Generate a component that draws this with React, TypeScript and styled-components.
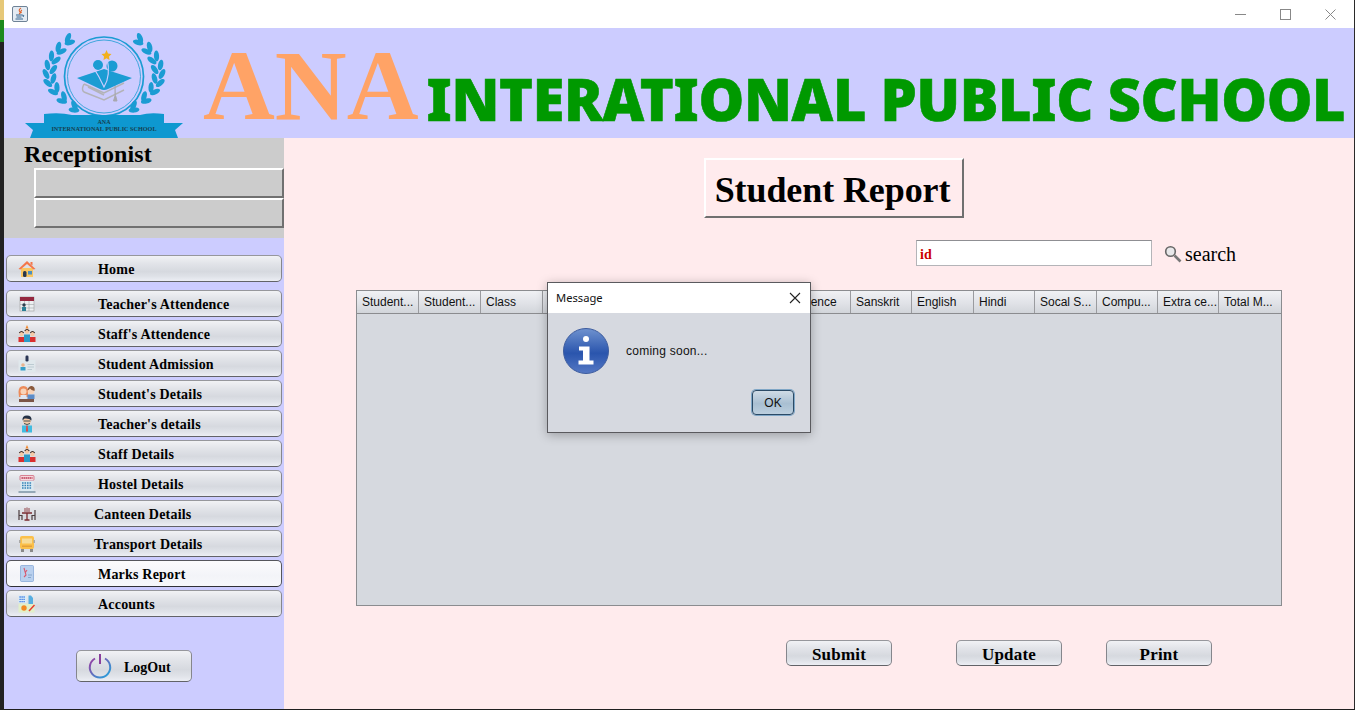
import styled, { createGlobalStyle } from "styled-components";

const SERIF = `"Liberation Serif", "Times New Roman", serif`;
const SANS = `"Liberation Sans", Arial, sans-serif`;
const NIMBUS = "linear-gradient(#f1f2f5 0%, #e2e4e9 30%, #d6d9df 62%, #dfe2e8 82%, #eceef4 100%)";

const GlobalStyle = createGlobalStyle`
  html, body { margin: 0; padding: 0; height: 100%; overflow: hidden; background: #1f1f1f; }
  * { box-sizing: border-box; }
`;

const Screen = styled.div`
  display: flex;
  width: 1355px;
  height: 710px;
  background: #1f1f1f;
`;

const DesktopEdge = styled.div`
  flex: 0 0 4px;
  background: linear-gradient(#e6c877 0 20px, #1c8a1c 20px 42px, #222 42px);
`;

const Window = styled.div`
  flex: 1;
  min-width: 0;
  display: flex;
  flex-direction: column;
  height: 709px;
  border-right: 1px solid #2a2a2a;
`;

const TitleBar = styled.div`
  flex: 0 0 28px;
  display: flex;
  align-items: center;
  justify-content: space-between;
  background: #fff;
  padding: 0 18px 0 8px;
`;

const Controls = styled.div`
  display: flex;
  align-items: center;
  gap: 34px;
`;

const Banner = styled.header`
  flex: 0 0 110px;
  display: flex;
  align-items: flex-start;
  padding-left: 20px;
  background: #ccccff;
  overflow: hidden;
`;

const LogoMark = styled.svg`
  flex: none;
`;

const Ana = styled.span`
  flex: none;
  margin: 8px 0 0 19px;
  font: bold 99.5px/100px ${SERIF};
  color: #ffa366;
`;

const SchoolName = styled.span`
  flex: none;
  margin: 33px 0 0 8px;
  font: 900 57.5px/76px "Noto Sans", sans-serif;
  letter-spacing: -0.36px;
  -webkit-text-stroke: 0.6px #009900;
  color: #009900;
  white-space: nowrap;
`;

const Body = styled.div`
  flex: 1;
  display: flex;
  min-height: 0;
`;

const Sidebar = styled.aside`
  flex: 0 0 280px;
  display: flex;
  flex-direction: column;
  background: #ccccff;
`;

const UserPanel = styled.div`
  height: 100px;
  padding-left: 30px;
  background: #cccccc;
`;

const UserRole = styled.h2`
  height: 30px;
  margin: 0 0 0 -10px;
  font: bold 24px/32px ${SERIF};
  letter-spacing: 0.1px;
  color: #000;
`;

const UserField = styled.div`
  height: 30px;
  background: #cccccc;
  border: 2px solid;
  border-color: #fff #707070 #707070 #fff;
`;

const Menu = styled.nav`
  display: flex;
  flex-direction: column;
  gap: 3px;
  margin: 17px 2px 0;
`;

const MenuButton = styled.button<{ $active?: boolean; $first?: boolean }>`
  display: flex;
  align-items: center;
  width: 276px;
  height: 27px;
  margin: 0 0 ${p => (p.$first ? "5px" : "0")};
  padding: 0 0 0 10px;
  background: ${p => (p.$active ? "linear-gradient(#fbfbfd, #f3f4f8 60%, #f7f8fb)" : NIMBUS)};
  border: 1px solid;
  border-color: ${p => (p.$active ? "#55565c #55565c #303136" : "#96979c #85868c #626368")};
  border-radius: 5px;
  color: #000;
`;

const IconSlot = styled.span`
  display: flex;
  flex: 0 0 20px;
  justify-content: center;
`;

const MenuLabel = styled.span<{ $left: number }>`
  margin: 2px 0 0 ${p => p.$left}px;
  font: bold 14px/16px ${SERIF};
  letter-spacing: 0.2px;
  white-space: nowrap;
`;

const LogoutButton = styled.button`
  display: flex;
  align-items: center;
  width: 116px;
  height: 32px;
  margin: 33px 0 0 72px;
  padding: 0 0 0 11px;
  gap: 12px;
  background: ${NIMBUS};
  border: 1px solid;
  border-color: #96979c #85868c #626368;
  border-radius: 5px;
  color: #000;
`;

const LogoutLabel = styled.span`
  margin-top: 3px;
  font: bold 14px/16px ${SERIF};
`;

const Main = styled.main`
  position: relative;
  flex: 1;
  display: flex;
  flex-direction: column;
  background: #ffebed;
`;

const ReportTitle = styled.h1`
  align-self: flex-start;
  width: 260px;
  height: 60px;
  margin: 20px 0 0 420px;
  padding-right: 3px;
  border: 2px solid;
  border-color: #fff #707070 #707070 #fff;
  font: bold 36px/60px ${SERIF};
  letter-spacing: -0.1px;
  text-align: center;
  color: #000;
`;

const SearchRow = styled.div`
  display: flex;
  align-items: center;
  margin: 22px 0 0 632px;
`;

const SearchInput = styled.div`
  width: 236px;
  height: 26px;
  padding: 2px 0 0 3px;
  background: #fff;
  border: 1px solid #b4b4b8;
  border-top-color: #8f8f93;
  font: bold 14px/24px ${SERIF};
  color: #cc0000;
`;

const SearchLabel = styled.span`
  display: flex;
  align-items: center;
  gap: 3px;
  margin: 1px 0 0 12px;
  font: 20px/24px ${SERIF};
  color: #000;
`;

const Table = styled.div`
  display: flex;
  flex-direction: column;
  width: 926px;
  height: 316px;
  margin: 24px 0 0 72px;
  background: #d6d9df;
  border: 1px solid #8b8c8f;
`;

const TableHead = styled.div`
  display: grid;
  grid-template-columns: 62px 62px 62px 61px 62px 62px 61px 62px 61px 62px 61px 62px 61px 61px 62px;
  height: 23px;
  background: linear-gradient(#f0f1f4, #dfe1e6 60%, #d2d5da);
  border-bottom: 1px solid #8b8c8f;
`;

const HeadCell = styled.span`
  padding-left: 5px;
  overflow: hidden;
  border-right: 1px solid #9a9b9f;
  font: 12px/23px ${SANS};
  color: #111;
  white-space: nowrap;
  &:last-child { border-right: 0; }
`;

const Actions = styled.div`
  display: flex;
  margin: 34px 0 0 502px;
`;

const ActionButton = styled.button<{ $gap: number }>`
  width: 106px;
  height: 26px;
  margin-right: ${p => p.$gap}px;
  padding: 3px 0 0;
  background: ${NIMBUS};
  border: 1px solid;
  border-color: #96979c #85868c #626368;
  border-radius: 5px;
  font: bold 17px/20px ${SERIF};
  letter-spacing: 0.2px;
  color: #000;
`;

const Dialog = styled.div`
  position: absolute;
  left: 263px;
  top: 144px;
  display: flex;
  flex-direction: column;
  width: 264px;
  height: 151px;
  background: #d6d9e0;
  border: 1px solid #5a5a5e;
  box-shadow: 0 2px 10px rgba(0, 0, 0, 0.28);
`;

const DialogTitle = styled.div`
  display: flex;
  align-items: center;
  justify-content: space-between;
  flex: 0 0 30px;
  padding: 0 9px 0 8px;
  background: #fff;
  font: 11.2px/16px "Noto Sans", sans-serif;
  color: #111;
`;

const DialogMessage = styled.div`
  display: flex;
  align-items: center;
  gap: 17px;
  padding: 15px 0 0 15px;
  font: 12px/16px ${SANS};
  letter-spacing: 0.25px;
  color: #111;
`;

const OkButton = styled.button`
  align-self: flex-end;
  width: 42px;
  height: 25px;
  margin: 16px 16px 0 0;
  padding: 1px 0 0;
  background: linear-gradient(#cfdbe6, #a9bfd2 55%, #bccfde);
  border: 1px solid #2b4a66;
  border-radius: 4px;
  box-shadow: 0 0 0 1px #7fa6c6;
  font: 12px/20px ${SANS};
  color: #111;
`;

// laurel leaves follow a curved branch from the top of the crest to its foot,
// outer and inner one by turns; t runs -1 (top) to 1 (bottom)
const LAUREL = Array.from({ length: 17 }, (_, i) => {
  const t = -1 + i / 8;
  const k = t < 0 ? 22 : 28;
  const outer = i % 2 === 0;
  const x = 104 - (58 - k * t * t) + (outer ? 0 : 7);
  const y = 74 + 36 * t;
  const tangent = (Math.atan((-2 * k * t) / 36) * 180) / Math.PI;
  return { x, y, r: tangent + (outer ? -28 : 28) };
});

function Logo() {
  return (
    <LogoMark width="160" height="110" viewBox="24 28 160 110">
      {LAUREL.map(({ x, y, r }, i) => (
        <g key={i} fill="#1b9cd3">
          <ellipse cx={x} cy={y} rx="2.600" ry="5.400" transform={`rotate(${r} ${x} ${y})`} />
          <ellipse cx={208 - x} cy={y} rx="2.600" ry="5.400" transform={`rotate(${-r} ${208 - x} ${y})`} />
        </g>
      ))}
      <circle cx="104" cy="76.500" r="39.500" fill="none" stroke="#1b9cd3" strokeWidth="1.700" />
      <circle cx="104" cy="76.500" r="36.500" fill="none" stroke="#1b9cd3" strokeWidth="0.800" />
      <path d="M84 84 L104 93 L124 83 M84 84 Q81 90 84 92 L104 100 L124 90 M88 87 L104 95" fill="none" stroke="#b3b3b8" strokeWidth="1.500" />
      <path d="M115 85 V96 L113.500 101 H117 L115.700 96" fill="#a8a8ae" stroke="#a8a8ae" strokeWidth="1" />
      <path d="M77 78 L104 69 L132 78 L108 89 Q104 91 100 89 Z" fill="#1b9cd3" />
      <circle cx="98" cy="65" r="5" fill="#1b9cd3" />
      <circle cx="112" cy="66" r="5.500" fill="#1b9cd3" />
      <path d="M93 67 Q99 76 104 87 Q111 76 107 58" fill="none" stroke="#ccccff" strokeWidth="1.200" />
      <path d="M106.500 50 L108 53.500 L111.500 54 L109 56.500 L109.500 60 L106.500 58.200 L103.500 60 L104 56.500 L101.500 54 L105 53.500 Z" fill="#f2b01e" />
      <path d="M44 114 Q60 112 72 115 H140 Q150 112 164 114 V123 H183 L175 130 L178 138 H30 L33 130 L25 123 H44 Z" fill="#0e98d0" />
      <text x="104" y="124" textAnchor="middle" fontFamily="Liberation Serif" fontWeight="bold" fontSize="6" fill="#16404f">ANA</text>
      <text x="104" y="131" textAnchor="middle" fontFamily="Liberation Serif" fontWeight="bold" fontSize="6.200" fill="#16404f">INTERNATIONAL PUBLIC SCHOOL</text>
    </LogoMark>
  );
}

function JavaIcon() {
  return (
    <svg width="16" height="16" viewBox="0 0 16 16">
      <rect x="0.500" y="0.500" width="15" height="15" rx="1.500" fill="#e4ebf3" stroke="#6e8296" />
      <path d="M9 2 Q6 4 8 6 Q9 7 7 8 M10 4 Q8 5 9.500 7" fill="none" stroke="#e0622a" strokeWidth="1.100" />
      <path d="M4 9 H10 M4.500 11 H9.500 M3.500 13 H11 M10 9 Q13 9 11 11" fill="none" stroke="#34648e" strokeWidth="1" />
    </svg>
  );
}

const HomeIcon = () => (
  <svg width="18" height="18" viewBox="0 0 18 18">
    <path d="M3 8 H15 V17 H3 Z" fill="#f9c662" />
    <path d="M0.500 9 L9 1 L17.500 9 L15.500 9.500 L9 4 L2.500 9.500 Z M12.500 2 H14.500 V5.500 L12.500 4 Z" fill="#f4764a" />
    <rect x="5" y="11" width="3.500" height="6" rx="1.500" fill="#27384f" />
    <rect x="10" y="11" width="4" height="3.500" fill="#4a8fc0" />
  </svg>
);

const CalendarIcon = () => (
  <svg width="16" height="16" viewBox="0 0 16 16">
    <rect x="1" y="1" width="14" height="14" fill="#eceff1" stroke="#a8a8a8" strokeWidth="0.700" />
    <rect x="1" y="1" width="14" height="4" fill="#94283f" />
    <path d="M5.500 5 V15 M10 5 V15 M1 8.500 H15 M1 12 H15" stroke="#a0a4a8" strokeWidth="0.600" />
    <circle cx="5" cy="9" r="1.700" fill="#2d3f4e" />
    <rect x="3" y="11" width="4" height="4" fill="#2a7f95" />
  </svg>
);

const StaffIcon = () => (
  <svg width="18" height="18" viewBox="0 0 18 18">
    <path d="M9 0 L10.500 3.500 H7.500 Z" fill="#f08a32" />
    <circle cx="9" cy="6.500" r="2.300" fill="#f5c9a6" />
    <circle cx="3.500" cy="9" r="2.200" fill="#f5c9a6" />
    <circle cx="14.500" cy="9" r="2.200" fill="#f5c9a6" />
    <path d="M6 9.500 H12 V17 H6 Z" fill="#2d9bc7" />
    <path d="M0.500 12 H6 V17 H0.500 Z M12 12 H17.500 V17 H12 Z" fill="#d92f2f" />
    <path d="M1.300 8 Q3.500 5 5.700 8 M12.300 8 Q14.500 5 16.700 8 M6.700 6 Q9 3 11.300 6" fill="none" stroke="#3b2b26" strokeWidth="1.200" />
  </svg>
);

const CardIcon = () => (
  <svg width="18" height="18" viewBox="0 0 18 18">
    <rect x="0.500" y="5" width="17" height="12" fill="#e0e8ec" />
    <rect x="7.500" y="0.500" width="3" height="6" rx="1.200" fill="#2b3554" />
    <circle cx="5" cy="10" r="1.800" fill="#e8b48f" />
    <rect x="2.500" y="12" width="5" height="3.500" fill="#38a0c9" />
    <path d="M9.500 9.500 H16 M9.500 12 H16 M9.500 14.500 H14" stroke="#bccbd2" strokeWidth="1" />
  </svg>
);

const StudentsIcon = () => (
  <svg width="18" height="18" viewBox="0 0 18 18">
    <rect x="1" y="14" width="15" height="3" fill="#7b5548" />
    <path d="M0.500 7 Q0.500 1 5.500 1 Q10.500 1 10 7 L10 12 H1 Z" fill="#ec8b5a" />
    <circle cx="5.500" cy="6.500" r="3" fill="#f8d3b8" />
    <rect x="2.500" y="10" width="6" height="4" fill="#dfe7f3" />
    <circle cx="13" cy="6" r="3.300" fill="#f8d3b8" />
    <path d="M9.500 4.500 Q11 0.500 14 1 Q17.500 2 16.500 6 Q13 5 12 3.500 Q11 5 9.500 5.500 Z" fill="#8a5a3c" />
    <rect x="9.500" y="9.500" width="7" height="4.500" fill="#5c8cc8" />
  </svg>
);

const TeacherIcon = () => (
  <svg width="18" height="18" viewBox="0 0 18 18">
    <rect x="4" y="10.500" width="10" height="7" fill="#42bce0" />
    <path d="M8.300 10.500 H9.700 L10 16 L9 17 L8 16 Z" fill="#e8433f" />
    <circle cx="9" cy="5.500" r="4" fill="#f5cba9" />
    <path d="M4.500 5.500 Q4 0.500 9 0.500 Q14 0.500 13.500 5.500 Q11 3 6.500 3.500 Z" fill="#253246" />
    <path d="M5.500 6 H8 M10 6 H12.500 M8 6 H10" stroke="#344" strokeWidth="0.900" />
    <path d="M6 8.500 Q9 10.500 12 8.500" fill="none" stroke="#344" strokeWidth="0.900" />
  </svg>
);

const HostelIcon = () => (
  <svg width="18" height="18" viewBox="0 0 18 18">
    <rect x="2" y="0.500" width="14" height="5" rx="1" fill="#f6d8dc" stroke="#c8415a" strokeWidth="0.600" />
    <path d="M3.500 3 H14.500" stroke="#b82c48" strokeWidth="1.300" strokeDasharray="1.400 .6" />
    <rect x="2.500" y="5.500" width="13" height="11" fill="#dbe9f1" />
    <path d="M4 8 H14 M4 10.500 H14 M4 13 H14" stroke="#3483b8" strokeWidth="1.400" strokeDasharray="1.600 .9" />
    <path d="M0.500 17 H17.500" stroke="#4b6c82" strokeWidth="1" />
  </svg>
);

const CanteenIcon = () => (
  <svg width="18" height="18" viewBox="0 0 18 18">
    <path d="M4 8 H14 M9 8 V15 M6.500 15 H11.500" stroke="#7a2b30" strokeWidth="1.300" fill="none" />
    <path d="M1 5 V15 M1 10.500 H4 V15 M17 5 V15 M17 10.500 H14 V15" stroke="#4b3d3f" strokeWidth="1.200" fill="none" />
    <path d="M7 3 V7 M9 2.500 V7 M11 3 V7" stroke="#8a3338" strokeWidth="0.900" />
  </svg>
);

const BusIcon = () => (
  <svg width="16" height="18" viewBox="0 0 16 18">
    <rect x="1" y="1" width="14" height="13" rx="2" fill="#fbc04a" />
    <rect x="3" y="3.500" width="10" height="5" fill="#f6dc9a" />
    <rect x="0" y="5" width="1.500" height="3" fill="#a9a9a9" />
    <rect x="14.500" y="5" width="1.500" height="3" fill="#a9a9a9" />
    <rect x="2" y="14" width="3" height="3" fill="#8a8a8a" />
    <rect x="11" y="14" width="3" height="3" fill="#8a8a8a" />
    <rect x="3" y="10.500" width="10" height="1.500" fill="#e3a03c" />
  </svg>
);

const MarksIcon = () => (
  <svg width="14" height="17" viewBox="0 0 14 17">
    <rect x="0.500" y="0.500" width="13" height="16" rx="1" fill="#b9d0ee" stroke="#7ea3d6" strokeWidth="0.700" />
    <path d="M4 3 L6 10 L4 12 M7 5 L5 8" stroke="#d8586f" strokeWidth="1.100" fill="none" />
    <path d="M8 10 H12 M8 12.500 H11" stroke="#86a6cc" strokeWidth="1" />
  </svg>
);

const AccountsIcon = () => (
  <svg width="18" height="18" viewBox="0 0 18 18">
    <rect x="0.500" y="8.500" width="16" height="9" fill="#e2f0c9" />
    <rect x="0.500" y="0.500" width="8" height="7.500" fill="#d8ecf8" />
    <path d="M1.500 2 H7.500 M1.500 4.300 H7.500 M1.500 6.600 H7.500" stroke="#2f6fe0" strokeWidth="1.300" strokeDasharray="1.200 .8" />
    <path d="M10.500 0.500 H13 L15 3 V9 H10.500 Z" fill="#56aee0" />
    <circle cx="6" cy="13" r="2.700" fill="#f28a22" />
    <path d="M11 16 L16.500 10" stroke="#e83d2e" strokeWidth="1.500" />
  </svg>
);

const PowerIcon = () => (
  <svg width="24" height="26" viewBox="0 0 24 26">
    <defs>
      <linearGradient id="power" x1="0" y1="0" x2="1" y2="1">
        <stop offset="0" stopColor="#9b3aa0" />
        <stop offset="1" stopColor="#1fa8e0" />
      </linearGradient>
    </defs>
    <path d="M7 5.500 A10.200 10.200 0 1 0 17 5.500" fill="none" stroke="url(#power)" strokeWidth="2" />
    <path d="M12 1 V11" stroke="#8a3f9c" strokeWidth="2" />
  </svg>
);

const MagnifierIcon = () => (
  <svg width="18" height="18" viewBox="0 0 18 18">
    <circle cx="6.500" cy="6.500" r="4.800" fill="#e8e8ea" stroke="#666" strokeWidth="1.600" />
    <path d="M10.500 10.500 L16.500 16.500" stroke="#777" strokeWidth="2.600" />
  </svg>
);

const InfoIcon = () => (
  <svg width="46" height="46" viewBox="0 0 46 46">
    <defs>
      <linearGradient id="info" x1="0" y1="0" x2="0" y2="1">
        <stop offset="0" stopColor="#6f92cf" />
        <stop offset="0.550" stopColor="#2a55ad" />
        <stop offset="1" stopColor="#5578c4" />
      </linearGradient>
    </defs>
    <circle cx="23" cy="23" r="22.500" fill="url(#info)" stroke="#3d5c9e" />
    <circle cx="23" cy="11" r="3" fill="#fff" />
    <path d="M16 18.500 H26.500 V32.500 H30.500 V36.500 H15.500 V32.500 H20 V22.500 H16 Z" fill="#fff" />
  </svg>
);

const MENU = [
  { label: "Home", icon: <HomeIcon />, left: 61, first: true },
  { label: "Teacher's Attendence", icon: <CalendarIcon />, left: 61 },
  { label: "Staff's Attendence", icon: <StaffIcon />, left: 61 },
  { label: "Student Admission", icon: <CardIcon />, left: 61 },
  { label: "Student's Details", icon: <StudentsIcon />, left: 61 },
  { label: "Teacher's details", icon: <TeacherIcon />, left: 61 },
  { label: "Staff Details", icon: <StaffIcon />, left: 61 },
  { label: "Hostel Details", icon: <HostelIcon />, left: 61 },
  { label: "Canteen Details", icon: <CanteenIcon />, left: 57 },
  { label: "Transport Details", icon: <BusIcon />, left: 57 },
  { label: "Marks Report", icon: <MarksIcon />, left: 61, active: true },
  { label: "Accounts", icon: <AccountsIcon />, left: 61 },
];

// columns 4 to 7 sit behind the dialog, only Science peeks out
const COLUMNS = [
  "Student...", "Student...", "Class", "", "", "", "", "Science",
  "Sanskrit", "English", "Hindi", "Socal S...", "Compu...", "Extra ce...", "Total M...",
];

export default function App() {
  return (
    <Screen>
      <GlobalStyle />
      <DesktopEdge />
      <Window>
        <TitleBar>
          <JavaIcon />
          <Controls>
            <svg width="11" height="11" viewBox="0 0 11 11"><path d="M0 5.500 H11" stroke="#888" /></svg>
            <svg width="11" height="11" viewBox="0 0 11 11"><rect x="0.500" y="0.500" width="10" height="10" fill="none" stroke="#888" /></svg>
            <svg width="11" height="11" viewBox="0 0 11 11"><path d="M0.500 0.500 L10.500 10.500 M10.500 0.500 L0.500 10.500" stroke="#888" /></svg>
          </Controls>
        </TitleBar>
        <Banner>
          <Logo />
          <Ana>ANA</Ana>
          <SchoolName>INTERATIONAL PUBLIC SCHOOL</SchoolName>
        </Banner>
        <Body>
          <Sidebar>
            <UserPanel>
              <UserRole>Receptionist</UserRole>
              <UserField />
              <UserField />
            </UserPanel>
            <Menu>
              {MENU.map(item => (
                <MenuButton key={item.label} $first={item.first} $active={item.active}>
                  <IconSlot>{item.icon}</IconSlot>
                  <MenuLabel $left={item.left}>{item.label}</MenuLabel>
                </MenuButton>
              ))}
            </Menu>
            <LogoutButton>
              <PowerIcon />
              <LogoutLabel>LogOut</LogoutLabel>
            </LogoutButton>
          </Sidebar>
          <Main>
            <ReportTitle>Student Report</ReportTitle>
            <SearchRow>
              <SearchInput>id</SearchInput>
              <SearchLabel>
                <MagnifierIcon />
                search
              </SearchLabel>
            </SearchRow>
            <Table>
              <TableHead>
                {COLUMNS.map((name, i) => (
                  <HeadCell key={i}>{name}</HeadCell>
                ))}
              </TableHead>
            </Table>
            <Actions>
              <ActionButton $gap={64}>Submit</ActionButton>
              <ActionButton $gap={44}>Update</ActionButton>
              <ActionButton $gap={0}>Print</ActionButton>
            </Actions>
            <Dialog>
              <DialogTitle>
                Message
                <svg width="12" height="12" viewBox="0 0 12 12"><path d="M1 1 L11 11 M11 1 L1 11" stroke="#222" strokeWidth="1.100" /></svg>
              </DialogTitle>
              <DialogMessage>
                <InfoIcon />
                coming soon...
              </DialogMessage>
              <OkButton>OK</OkButton>
            </Dialog>
          </Main>
        </Body>
      </Window>
    </Screen>
  );
}
